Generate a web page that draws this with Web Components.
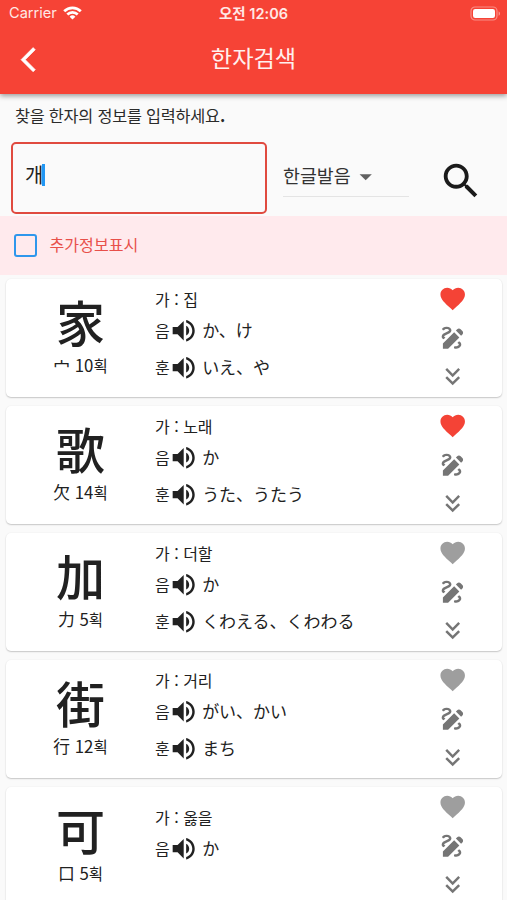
<!DOCTYPE html>
<html lang="ko">
<head>
<meta charset="utf-8">
<title>한자검색</title>
<style>
  body {
    margin: 0;
    height: 900px;
    overflow: hidden;
    background: #fafafa;
    color: #212121;
    font-family: "Noto Sans CJK KR", sans-serif;
  }
</style>
</head>
<body>
<hanja-app></hanja-app>

<script>
const ICONS = {
  back: 'M11.67 3.87L9.9 2.1 0 12l9.9 9.9 1.77-1.77L3.54 12z',
  search: 'M15.5 14h-.79l-.28-.27C15.41 12.59 16 11.11 16 9.5 16 5.91 13.09 3 9.5 3S3 5.91 3 9.5 5.91 16 9.5 16c1.61 0 3.09-.59 4.23-1.57l.27.28v.79l5 4.99L20.49 19l-4.99-5zm-6 0C7.01 14 5 11.99 5 9.5S7.01 5 9.5 5 14 7.01 14 9.5 11.99 14 9.5 14z',
  dropdown: 'M7 10l5 5 5-5z',
  heart: 'M12 21.35l-1.45-1.32C5.4 15.36 2 12.28 2 8.5 2 5.42 4.42 3 7.5 3c1.74 0 3.41.81 4.5 2.09C13.09 3.81 14.76 3 16.5 3 19.58 3 22 5.42 22 8.5c0 3.78-3.4 6.86-8.55 11.54L12 21.35z',
  draw: 'M18.85 10.39l1.06-1.06c.78-.78.78-2.05 0-2.83L18.5 5.09c-.78-.78-2.05-.78-2.83 0l-1.06 1.06 4.24 4.24zM13.19 7.56L4 16.76V21h4.24l9.19-9.19-4.24-4.25zM19 17.5c0 2.19-2.54 3.5-5 3.5-.55 0-1-.45-1-1s.45-1 1-1c1.54 0 3-.73 3-1.5 0-.47-.48-.87-1.23-1.2l1.48-1.48C18.32 15.45 19 16.29 19 17.5zM4.58 13.35C3.61 12.79 3 12.06 3 11c0-1.8 1.89-2.63 3.56-3.36C7.59 7.18 9 6.56 9 6c0-.41-.78-1-2-1-1.26 0-1.8.61-1.83.64-.35.41-.98.46-1.4.12-.41-.34-.49-.95-.15-1.38C3.73 4.24 4.76 3 7 3s4 1.32 4 3c0 1.87-1.93 2.72-3.64 3.47C6.42 9.88 5 10.5 5 11c0 .31.43.6 1.07.86l-1.49 1.49z',
  more: 'M18 6.41L16.59 5 12 9.58 7.41 5 6 6.41l6 6zM18 13l-1.41-1.41L12 16.17l-4.59-4.58L6 13l6 6z',
  volume: 'M3 9v6h4l5 5V4L7 9H3zm13.5 3c0-1.77-1.02-3.29-2.5-4.03v8.05c1.48-.73 2.5-2.25 2.5-4.02zM14 3.23v2.06c2.89.86 5 3.54 5 6.71s-2.11 5.85-5 6.71v2.06c4.01-.91 7-4.49 7-8.77s-2.99-7.86-7-8.77z',
};

const ENTRIES = [
  { kanji: '家', radical: '宀', strokes: 10, sound: '가', meaning: '집', on: 'か、け', kun: 'いえ、や', liked: true },
  { kanji: '歌', radical: '欠', strokes: 14, sound: '가', meaning: '노래', on: 'か', kun: 'うた、うたう', liked: true },
  { kanji: '加', radical: '力', strokes: 5, sound: '가', meaning: '더할', on: 'か', kun: 'くわえる、くわわる' },
  { kanji: '街', radical: '行', strokes: 12, sound: '가', meaning: '거리', on: 'がい、かい', kun: 'まち' },
  { kanji: '可', radical: '口', strokes: 5, sound: '가', meaning: '옳을', on: 'か' },
];

class MdIcon extends HTMLElement {
  constructor() {
    super();
    this.attachShadow({ mode: 'open' });
  }

  connectedCallback() {
    this.shadowRoot.innerHTML = `
      <style>
        :host {
          display: block;
          flex: none;
          width: var(--icon-size, 29.4px);
          height: var(--icon-size, 29.4px);
        }

        svg {
          display: block;
          width: 100%;
          height: 100%;
          overflow: visible;
          fill: currentColor;
          stroke: currentColor;
          stroke-width: var(--icon-stroke, 0);
        }
      </style>
      <svg viewBox="0 0 24 24"><path d="${ICONS[this.getAttribute('name')]}"/></svg>
    `;
  }
}

class StatusBar extends HTMLElement {
  constructor() {
    super();
    this.attachShadow({ mode: 'open' }).innerHTML = `
      <style>
        :host {
          display: grid;
          grid-template-columns: 1fr auto 1fr;
          align-items: center;
          height: 27px;
          padding: 0 6px 0 9px;
          color: #ffe9e6;
          font: 14.6px/27px Inter, "Noto Sans CJK KR", sans-serif;
        }

        .left {
          display: flex;
          align-items: center;
          gap: 6px;
        }

        .left svg {
          margin-top: -1px;
        }

        .time {
          margin-right: 3px;
          font-size: 14.5px;
          font-weight: 600;
        }

        .battery {
          justify-self: end;
        }

        svg {
          display: block;
        }
      </style>
      <div class="left">
        <span>Carrier</span>
        <svg width="19" height="14" viewBox="0 0 19 14" fill="none" stroke="#fff" stroke-width="2.7">
          <path d="M1.2 5.2a11.8 11.8 0 0 1 16.6 0M4.3 8.5a7.4 7.4 0 0 1 10.4 0"/>
          <path d="M9.5 13.6L6.6 10.7a4.1 4.1 0 0 1 5.8 0z" fill="#fff" stroke="none"/>
        </svg>
      </div>
      <div class="time">오전 12:06</div>
      <svg class="battery" width="31" height="15" viewBox="0 0 31 15">
        <rect x="1" y="1" width="26" height="13" rx="4" fill="none" stroke="#fff" stroke-opacity=".4" stroke-width="1.2"/>
        <rect x="3" y="3" width="22" height="9" rx="2.2" fill="#fff"/>
        <path d="M28.6 5.2v4.6c1.9-.8 1.9-3.8 0-4.6z" fill="#fff" fill-opacity=".45"/>
      </svg>
    `;
  }
}

class AppBar extends HTMLElement {
  constructor() {
    super();
    this.attachShadow({ mode: 'open' }).innerHTML = `
      <style>
        :host {
          display: block;
          position: relative;
          height: 94px;
          background: #f64336;
          box-shadow: 0 2px 5px rgba(0, 0, 0, .38);
        }

        .bar {
          display: grid;
          grid-template-columns: 1fr auto 1fr;
          align-items: center;
          height: 64px;
          padding: 0 20.6px;
          color: #fff;
        }

        md-icon {
          --icon-stroke: .5;
          margin-top: 1px;
        }

        .title {
          height: 64px;
          font-size: 23.2px;
          line-height: 60px;
          color: #fff0ee;
        }
      </style>
      <status-bar></status-bar>
      <div class="bar">
        <md-icon name="back"></md-icon>
        <div class="title"><slot></slot></div>
      </div>
    `;
  }
}

class SearchForm extends HTMLElement {
  constructor() {
    super();
    this.attachShadow({ mode: 'open' }).innerHTML = `
      <style>
        :host {
          display: block;
          height: 122px;
          box-sizing: border-box;
          padding: 8px 0 0 11px;
        }

        .hint {
          height: 27px;
          padding-left: 4px;
          font-size: 16.3px;
          line-height: 27px;
          letter-spacing: -.22px;
          white-space: nowrap;
          color: #2b2b2b;
        }

        .dot {
          font-weight: 700;
        }

        .row {
          display: flex;
          margin-top: 12.5px;
        }

        .field {
          display: flex;
          align-items: center;
          box-sizing: border-box;
          width: 256px;
          height: 72px;
          padding: 0 0 6px 12px;
          border: 2.4px solid #e04a3f;
          border-radius: 5px;
          font-size: 20px;
        }

        .caret {
          width: 2.4px;
          height: 22px;
          margin-left: -1px;
          background: #2196f3;
        }

        .select {
          display: flex;
          align-items: center;
          box-sizing: border-box;
          width: 126px;
          height: 55px;
          margin-left: 16px;
          padding-top: 14px;
          border-bottom: 1.2px solid #e4e4e4;
          font-size: 18.4px;
          color: #333;
        }

        .select span {
          margin-top: -1px;
        }

        .select md-icon {
          margin-top: 3px;
          color: #616161;
        }

        .search {
          --icon-size: 46px;
          margin: 16px 0 0 28.5px;
          color: #1b1b1b;
        }
      </style>
      <div class="hint">찾을 한자의 정보를 입력하세요<span class="dot">.</span></div>
      <div class="row">
        <div class="field"><span>개</span><i class="caret"></i></div>
        <div class="select"><span>한글발음</span><md-icon name="dropdown"></md-icon></div>
        <md-icon class="search" name="search"></md-icon>
      </div>
    `;
  }
}

class CheckRow extends HTMLElement {
  constructor() {
    super();
    this.attachShadow({ mode: 'open' }).innerHTML = `
      <style>
        :host {
          display: flex;
          align-items: center;
          gap: 13px;
          height: 58.5px;
          padding-left: 14px;
          background: #ffeaed;
          color: #e8504a;
          font-size: 16.1px;
        }

        .box {
          box-sizing: border-box;
          width: 22.5px;
          height: 22.5px;
          border: 2.4px solid #2f97ec;
          border-radius: 3px;
        }

        .label {
          margin-top: -2px;
        }
      </style>
      <span class="box"></span>
      <span class="label"><slot></slot></span>
    `;
  }
}

class HanjaCard extends HTMLElement {
  constructor() {
    super();
    this.attachShadow({ mode: 'open' });
  }

  set entry(entry) {
    const reading = (label, text) => (text ? `
      <div class="reading">
        <span class="label">${label}</span><md-icon name="volume"></md-icon><span class="kana" lang="ja">${text}</span>
      </div>` : '');

    this.shadowRoot.innerHTML = `
      <style>
        :host {
          display: grid;
          grid-template-columns: 149px 1fr 98px;
          height: 118px;
          border-radius: 5px;
          background: #fff;
          box-shadow: 0 1px 1.5px rgba(0, 0, 0, .2), 0 0 2px rgba(0, 0, 0, .05);
          white-space: nowrap;
        }

        .glyph {
          display: flex;
          flex-direction: column;
          align-items: center;
          padding-top: 12px;
          font-family: "Noto Sans CJK JP", "Noto Sans CJK KR", sans-serif;
        }

        .kanji {
          font-size: 49px;
          font-weight: 500;
          line-height: 59px;
        }

        .strokes {
          margin-top: 3px;
          font-size: 16.8px;
          line-height: 25px;
        }

        .strokes span {
          font-family: "Noto Sans CJK KR", sans-serif;
          font-size: 15.5px;
        }

        .info {
          padding-top: ${entry.kun ? 7 : 17}px;
          font-size: 16px;
        }

        .meaning {
          height: 27px;
          line-height: 27px;
        }

        .reading {
          display: flex;
          align-items: center;
          height: 37px;
        }

        .label {
          margin-top: -3px;
        }

        .reading md-icon {
          margin-left: -1px;
        }

        .kana {
          margin: -4px 0 0 4px;
          font-family: "Noto Sans CJK JP", sans-serif;
          font-size: 17px;
        }

        .actions {
          display: flex;
          flex-direction: column;
          align-items: center;
          gap: 9.8px;
          padding-top: 5.4px;
          color: #757575;
        }

        .heart {
          color: ${entry.liked ? '#f44336' : '#9e9e9e'};
        }
      </style>
      <div class="glyph">
        <div class="kanji" lang="ja">${entry.kanji}</div>
        <div class="strokes">${entry.radical} ${entry.strokes}<span>획</span></div>
      </div>
      <div class="info">
        <div class="meaning">${entry.sound} : ${entry.meaning}</div>
        ${reading('음', entry.on)}
        ${reading('훈', entry.kun)}
      </div>
      <div class="actions">
        <md-icon class="heart" name="heart"></md-icon>
        <md-icon name="draw"></md-icon>
        <md-icon name="more"></md-icon>
      </div>
    `;
  }
}

class HanjaApp extends HTMLElement {
  constructor() {
    super();
    this.attachShadow({ mode: 'open' }).innerHTML = `
      <style>
        :host {
          display: block;
          width: 507px;
          height: 900px;
          overflow: hidden;
        }

        .list {
          display: flex;
          flex-direction: column;
          gap: 9px;
          padding: 4px 5px 0 6px;
        }
      </style>
      <app-bar>한자검색</app-bar>
      <search-form></search-form>
      <check-row>추가정보표시</check-row>
      <div class="list"></div>
    `;
  }

  connectedCallback() {
    const list = this.shadowRoot.querySelector('.list');
    ENTRIES.forEach((entry) => {
      const card = document.createElement('hanja-card');
      card.entry = entry;
      list.appendChild(card);
    });
  }
}

customElements.define('md-icon', MdIcon);
customElements.define('status-bar', StatusBar);
customElements.define('app-bar', AppBar);
customElements.define('search-form', SearchForm);
customElements.define('check-row', CheckRow);
customElements.define('hanja-card', HanjaCard);
customElements.define('hanja-app', HanjaApp);
</script>
</body>
</html>
